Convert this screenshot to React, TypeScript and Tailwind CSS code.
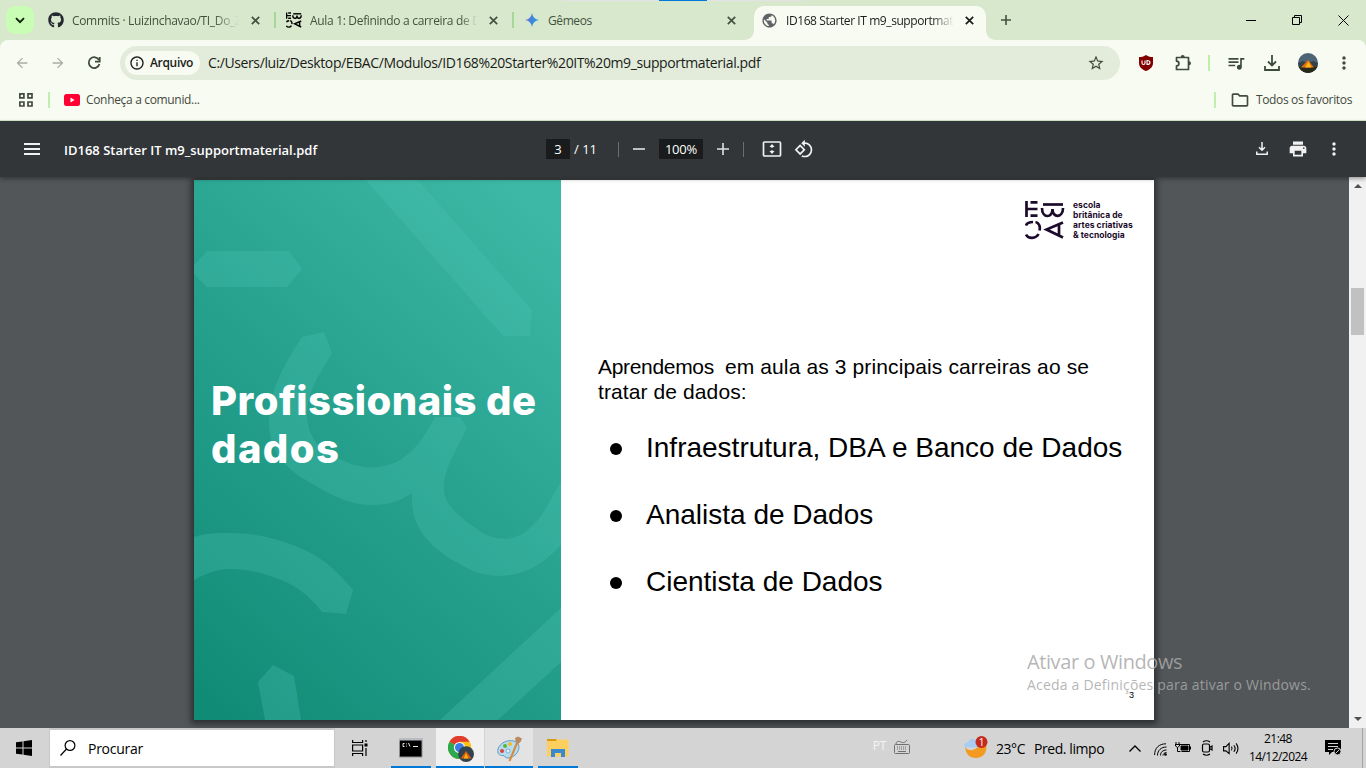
import React from 'react';
import {
  MdArrowBack, MdArrowForward, MdStarBorder, MdQueueMusic, MdPrint, MdMoreVert, MdPublic,
  MdRotate90DegreesCcw, MdOutlineFolder, MdInfoOutline,
} from 'react-icons/md';
import { FaGithub } from 'react-icons/fa';

function EbacMark({ className, weight = 3 }: { className: string; weight?: number }) {
  return (
    <svg viewBox="0 0 40 40" className={className} fill="none" stroke="currentColor" strokeWidth={weight}>
      <path d="M1.500 1v16M2 9h10.500M5.500 2.300h7M5.500 15.700h7" />
      <path d="M18 4.500h20" />
      <path d="M17 8c0 10.500 10.500 10.500 10.500 1c0 9.500 10.500 9 10.500-1" />
      <path d="M1 25.500c1-3 4-3.500 7-3.500M10.500 22c3.500.5 5 4.500 4 8.500M1 34.500c2 4.500 10 4.500 12.500-.5" />
      <path d="M38 22.500L21.500 29.500L38 37.500M34 25v10" />
    </svg>
  );
}

function Avatar({ className }: { className: string }) {
  return (
    <svg viewBox="0 0 20 20" className={className}>
      <defs><clipPath id="round"><circle cx="10" cy="10" r="10" /></clipPath></defs>
      <g clipPath="url(#round)">
        <rect width="20" height="20" fill="#4d6475" />
        <path d="M0 10l5-2 5 2 5-2 5 2v11H0z" fill="#35424a" />
        <rect y="14" width="20" height="6" fill="#26291c" />
        <path d="M3 14.500L10 7l6 7.500z" fill="#e0720c" />
        <path d="M7 14.500l3.500-6 3 6z" fill="#ffb31a" />
      </g>
    </svg>
  );
}

function Gemini() {
  return (
    <svg viewBox="0 0 16 16" className="size-[14px]">
      <defs>
        <linearGradient id="gem" x1="0" y1="0" x2="1" y2="0.3">
          <stop offset="0" stopColor="#8a72c8" /><stop offset=".5" stopColor="#4b7fdc" /><stop offset="1" stopColor="#1ba1e3" />
        </linearGradient>
      </defs>
      <path d="M8 0c.8 4.600 3.400 7.200 8 8c-4.600.8-7.200 3.400-8 8c-.8-4.600-3.400-7.200-8-8c4.600-.8 7.200-3.400 8-8z" fill="url(#gem)" />
    </svg>
  );
}

function CloseX({ className }: { className: string }) {
  return (
    <svg viewBox="0 0 13 13" className={className} fill="none" stroke="currentColor" strokeWidth="1.700"><path d="M2.800 2.800l7.400 7.400M10.200 2.800l-7.400 7.400" /></svg>
  );
}

function TabStrip() {
  return (
    <div className="relative flex h-10 shrink-0 bg-[#d8e8cd] text-[12px] text-[#42523f]">
      <div className="ml-[6px] mt-[6px] flex size-7 items-center justify-center rounded-[9px] bg-[#c9fdb6]">
        <svg viewBox="0 0 10 7" className="h-[7px] w-[10px]" fill="none" stroke="#10200c" strokeWidth="1.900"><path d="M1 1.200l4 4 4-4" /></svg>
      </div>
      <div className="ml-[14px] flex w-[214px] items-center">
        <FaGithub className="size-4 shrink-0 text-[#24292f]" />
        <span className="ml-2 mt-px w-[168px] overflow-hidden whitespace-nowrap tracking-[-0.33px] [mask-image:linear-gradient(90deg,#000_85%,transparent)]">Commits · Luizinchavao/TI_Do_Zero</span>
        <CloseX className="ml-[10px] size-[13px] shrink-0" />
      </div>
      <div className="ml-[12px] mt-3 h-4 w-[2px] bg-[#a3d896]" />
      <div className="ml-[10px] flex w-[214px] items-center">
        <EbacMark className="size-4 shrink-0 text-black" weight={3.6} />
        <span className="ml-2 mt-px w-[168px] overflow-hidden whitespace-nowrap tracking-[-0.32px] [mask-image:linear-gradient(90deg,#000_90%,transparent)]">Aula 1: Definindo a carreira de Dados</span>
        <CloseX className="ml-[10px] size-[13px] shrink-0" />
      </div>
      <div className="ml-[12px] mt-3 h-4 w-[2px] bg-[#a3d896]" />
      <div className="ml-[11px] flex w-[214px] items-center">
        <Gemini />
        <span className="ml-[9px] mt-px w-[167px] tracking-[-0.4px]">Gêmeos</span>
        <CloseX className="ml-[10px] size-[13px] shrink-0" />
      </div>
      <svg viewBox="0 0 10 10" className="mt-[30px] ml-[5px] size-[10px] text-[#f8fbf1]"><path d="M10 0v10H0C6 10 10 6 10 0z" fill="currentColor" /></svg>
      <div className="mt-[6px] flex h-[34px] w-[232px] items-center rounded-t-[10px] bg-[#f8fbf1] text-[#1a1c18]">
        <MdPublic className="ml-[7px] -mt-[6px] size-[17px] shrink-0 text-[#5f6368]" />
        <span className="-mt-[4px] ml-2 w-[168px] overflow-hidden whitespace-nowrap tracking-[-0.42px] [mask-image:linear-gradient(90deg,#000_87%,transparent)]">ID168 Starter IT m9_supportmaterial</span>
        <CloseX className="-mt-[6px] ml-[9px] size-[13px] shrink-0" />
      </div>
      <svg viewBox="0 0 10 10" className="mt-[30px] size-[10px] text-[#f8fbf1]"><path d="M0 0v10h10C4 10 0 6 0 0z" fill="currentColor" /></svg>
      <svg viewBox="0 0 10 10" className="ml-[5px] mt-[15px] size-[10px]" fill="none" stroke="currentColor" strokeWidth="1.600"><path d="M5 0v10M0 5h10" /></svg>
      <div className="ml-auto mt-[15px] flex gap-[35px] pr-[17px] text-black">
        <svg viewBox="0 0 11 11" className="size-[11px]" stroke="currentColor" fill="none"><path d="M0 5.500h10" /></svg>
        <svg viewBox="0 0 11 11" className="size-[11px]" stroke="currentColor" fill="none"><path d="M.5 2.500h7v7h-7zM2.500 2.500v-2h7v7h-2" /></svg>
        <svg viewBox="0 0 11 11" className="size-[11px]" stroke="currentColor" fill="none"><path d="M.5.5l10 10M10.500.5l-10 10" /></svg>
      </div>
      <div className="absolute left-[563px] top-0 h-px w-[240px] bg-[#e4e2e7]" />
      <div className="absolute left-[659px] top-0 h-px w-12 bg-[#0078d7]" />
    </div>
  );
}

function Toolbar() {
  return (
    <div className="shrink-0 bg-[#d8e8cd]">
      <div className="flex h-[46px] items-center rounded-t-[8px] bg-[#f8fbf1] text-[#3f4b3a]">
        <MdArrowBack className="ml-[14px] size-4 text-[#a9ada3]" />
        <MdArrowForward className="ml-5 size-4 text-[#a9ada3]" />
        <svg viewBox="0 0 18 18" className="ml-[19px] size-[18px]" fill="none" stroke="currentColor" strokeWidth="1.800"><path d="M14 6.200A5.400 5.400 0 1 0 14.400 10" /><path d="M14.700 3v4.700H10" /></svg>
        <div className="ml-[17px] flex h-[34px] w-[1000px] items-center rounded-full bg-[#e3ecdb]">
          <div className="ml-[5px] flex h-6 w-[75px] items-center rounded-full bg-[#f8fbf1] pl-1 text-[12px] font-semibold tracking-[-0.33px] text-[#1a1c18]">
            <MdInfoOutline className="mr-[5px] size-4" />Arquivo
          </div>
          <span className="-mt-px ml-2 whitespace-nowrap text-[14px] tracking-[-0.39px] text-[#1a1c18]">C:/Users/luiz/Desktop/EBAC/Modulos/ID168%20Starter%20IT%20m9_supportmaterial.pdf</span>
          <MdStarBorder className="ml-auto mr-[15px] size-[18px]" />
        </div>
        <svg viewBox="0 0 16 16" className="ml-[18px] size-4">
          <path d="M8 0c2.500 1.700 4.500 2 7 2v6c0 4-3 6.500-7 8c-4-1.500-7-4-7-8V2c2.500 0 4.500-.3 7-2z" fill="#800000" />
          <path d="M4 5.500v2.500q0 1.500 1.500 1.500T7 8V5.500M9 5.500v4c4 0 4-4 0-4z" fill="none" stroke="#fff" strokeWidth="1.100" />
        </svg>
        <svg viewBox="0 0 18 18" className="ml-[20px] size-[18px]">
          <path d="M2.500 3.500h12v12h-12v-3.600a2.400 2.400 0 0 0 0-4.800z" fill="none" stroke="currentColor" strokeWidth="1.700" strokeLinejoin="round" />
          <path d="M6.700 3a2 2 0 0 1 4 0zM15 7.300a2 2 0 0 1 0 4z" fill="currentColor" />
        </svg>
        <div className="ml-[16px] h-4 w-[2px] bg-[#bdf0ab]" />
        <MdQueueMusic className="ml-[16px] -mt-px size-[20px]" />
        <svg viewBox="0 0 16 16" className="ml-[18px] size-4" fill="none" stroke="currentColor" strokeWidth="1.800"><path d="M8 0v10M4 6.500l4 4 4-4M1 11v4h14v-4" /></svg>
        <Avatar className="ml-[18px] size-5" />
        <MdMoreVert className="ml-[16px] size-5" />
      </div>
      <div className="flex h-[34px] items-start bg-[#f8fbf1] text-[12px] text-[#42493e]">
        <svg viewBox="0 0 14 14" className="ml-[19px] mt-[7px] size-[14px]" fill="none" stroke="#42493e" strokeWidth="1.700"><path d="M.9.9h4v4h-4zM9 .9h4v4H9zM.9 9h4v4h-4zM9 9h4v4H9z" /></svg>
        <div className="ml-[15px] mt-[6px] h-4 w-[2px] bg-[#bdf0ab]" />
        <svg viewBox="0 0 16 12" className="ml-[14px] mt-2 h-3 w-4"><rect width="16" height="12" rx="2.500" fill="#ff0033" /><path d="M6.500 3.500v5l4-2.500z" fill="#fff" /></svg>
        <span className="ml-[6px] mt-[5px] leading-[18px] tracking-[-0.33px]">Conheça a comunid...</span>
        <div className="ml-auto mt-[6px] h-4 w-[2px] bg-[#bdf0ab]" />
        <MdOutlineFolder className="ml-[14px] mt-[4px] size-[20px]" />
        <span className="ml-[6px] mr-[14px] mt-[5px] leading-[18px] tracking-[-0.35px]">Todos os favoritos</span>
      </div>
      <div className="h-px bg-[#d8e8cd]" />
    </div>
  );
}

function PdfBar() {
  return (
    <div className="relative z-10 flex h-14 shrink-0 items-center bg-[#323639] text-[13px] text-white shadow-[0_2px_4px_rgba(0,0,0,0.35)]">
      <svg viewBox="0 0 16 12" className="ml-6 h-3 w-4" fill="#f1f1f1"><path d="M0 0h16v2H0zM0 5h16v2H0zM0 10h16v2H0z" /></svg>
      <span className="ml-6 mt-[3px] w-[482px] font-semibold">ID168 Starter IT m9_supportmaterial.pdf</span>
      <span className="flex h-5 w-6 items-center justify-center bg-[#191b1c] pt-[2px]">3</span>
      <span className="ml-[4px] mt-[2px] w-[23px]">/ 11</span>
      <div className="ml-[21px] h-[15px] w-px bg-[#6b6e70]" />
      <svg viewBox="0 0 12 12" className="ml-[14px] size-3" stroke="#d8d9d9" strokeWidth="1.700"><path d="M0 6h12" /></svg>
      <span className="ml-[14px] flex h-5 w-11 items-center justify-center bg-[#191b1c] pt-[2px] font-medium tracking-[-0.2px]">100%</span>
      <svg viewBox="0 0 12 12" className="ml-[14px] size-3" stroke="#e0e1e1" strokeWidth="1.600"><path d="M0 6h12M6 0v12" /></svg>
      <div className="ml-[14px] h-[15px] w-px bg-[#6b6e70]" />
      <svg viewBox="0 0 20 16" className="ml-[18px] h-4 w-5" fill="none" stroke="#f1f1f1" strokeWidth="1.700">
        <rect x="1.500" y="1" width="17" height="14" rx="1" />
        <path d="M10 3l2.600 3H7.400zM10 13l2.600-3H7.400z" fill="#f1f1f1" stroke="none" />
        <path d="M10 5v2M10 9v2" strokeWidth="1.200" />
      </svg>
      <MdRotate90DegreesCcw className="ml-[12px] size-[20px] text-[#f1f1f1]" />
      <div className="ml-auto mr-[22px] flex items-center text-[#f1f1f1]">
        <svg viewBox="0 0 12 13" className="-mt-px h-[13px] w-3" fill="none" stroke="currentColor" strokeWidth="1.500"><path d="M6 0v8M3 5.200l3 3 3-3M.8 9.500v2.700h10.400V9.500" /></svg>
        <MdPrint className="ml-[20px] size-5" />
        <MdMoreVert className="ml-[16px] size-5" />
      </div>
    </div>
  );
}

function SlideArt() {
  return (
    <svg viewBox="0 0 367 540" className="absolute inset-0 h-full w-full" fill="#4cc4b4" fillOpacity=".3">
      <path d="M172 0H224L338 130L336 156H309Z" />
      <path d="M0 85L13 71H95L108 89L93 107H13L0 94Z" />
      <path d="M108 157L130 152L138 173C124 197 113 212 113 235C114 261 129 271 144 278C165 290 190 291 209 278C226 266 233 251 241 237L266 237L273 248L263 268C252 288 244 309 255 324C262 335 277 345 287 352C302 361 322 362 336 348C349 337 357 318 367 302V365C351 382 334 395 306 396C289 396 277 391 262 382C234 366 216 346 218 313C206 321 196 325 178 325C152 325 130 311 110 299C86 284 75 266 75 242C76 210 87 190 108 157Z" />
      <path d="M0 357C11 353 23 353 36 353C66 353 92 361 113 371C133 381 147 395 159 410L152 434L128 432C114 414 99 403 79 397C65 392 50 389 36 389C22 389 11 394 0 400Z" />
      <path d="M71 540L64 502L79 485L100 496L107 540Z" />
      <path d="M246 540L367 428V482L304 540Z" />
    </svg>
  );
}

const careers = ['Infraestrutura, DBA e Banco de Dados', 'Analista de Dados', 'Cientista de Dados'];

function Slide() {
  return (
    <div className="ml-[194px] mt-[3px] flex h-[540px] w-[960px] shrink-0 bg-white shadow-[0_1px_6px_3px_rgba(0,0,0,0.45)]">
      <div className="relative w-[367px] shrink-0 bg-[linear-gradient(222deg,#3db8a6_5%,#26a18e_50%,#108c76_97%)]">
        <SlideArt />
        <h1 className="relative whitespace-nowrap pl-[17px] pt-[197px] font-['Inter'] text-[40px] font-extrabold leading-[48px] tracking-[0.46px] text-white">Profissionais de<br /><span className="tracking-[1.4px]">dados</span></h1>
      </div>
      <div className="flex min-w-0 flex-1 flex-col font-['Liberation_Sans'] text-black">
        <div className="mr-[20px] mt-[20px] flex self-end text-[#1c0b2b]">
          <EbacMark className="h-10 w-10" weight={2.700} />
          <div className="ml-[8px] w-[61px] whitespace-nowrap font-['Inter'] text-[8.500px] font-bold leading-[10px] tracking-[0.03px]">escola<br />britânica de<br />artes criativas<br />&amp; tecnologia</div>
        </div>
        <p className="ml-[37px] mt-[114px] whitespace-pre text-[21px] leading-[25px]"><span className="tracking-[-0.32px]">{'Aprendemos  '}</span><span className="tracking-[0.12px]">{'em aula as 3 principais carreiras ao se'}</span>{'\n'}<span className="tracking-[0.1px]">tratar de dados:</span></p>
        <ul className="ml-[49px] mt-[10px]">
          {careers.map((c) => (
            <li key={c} className="flex h-[67px] items-center whitespace-nowrap text-[28px] leading-8">
              <span className="mr-[24px] mt-[2px] size-[12px] rounded-full bg-black" />{c}
            </li>
          ))}
        </ul>
        <span className="mb-[20px] mr-[20px] mt-auto self-end text-[9px] leading-[10px]">3</span>
      </div>
    </div>
  );
}

function Viewer() {
  return (
    <div className="relative flex min-h-0 flex-1 overflow-hidden bg-[#525659]">
      <Slide />
      <div className="ml-auto flex w-[17px] flex-col items-center bg-[#f1f1f1]">
        <svg viewBox="0 0 8 4" className="mt-[7px] h-1 w-2" fill="#505050"><path d="M0 4l4-4 4 4z" /></svg>
        <div className="mt-[100px] h-[47px] w-[13px] bg-[#c1c1c1]" />
        <svg viewBox="0 0 8 4" className="mb-[7px] mt-auto h-1 w-2" fill="#505050"><path d="M0 0l4 4 4-4z" /></svg>
      </div>
      <div className="absolute left-[1027px] top-[472px] whitespace-nowrap text-[#a8a8a8]/85">
        <div className="text-[20px] leading-[26px] tracking-[-0.4px]">Ativar o Windows</div>
        <div className="text-[14px] leading-[20px] tracking-[0.2px]">Aceda a Definições para ativar o Windows.</div>
      </div>
    </div>
  );
}

function Taskbar() {
  return (
    <div className="flex h-10 shrink-0 items-stretch bg-[#d4d4d4] text-[14px] text-black">
      <svg viewBox="0 0 16 16" className="ml-4 mt-3 size-4"><path d="M0 2.300L6.500 1.400V7.500H0zM7.500 1.200L16 0v7.500H7.500zM0 8.500h6.500v6.100L0 13.700zM7.500 8.500H16V16L7.500 14.800z" /></svg>
      <div className="ml-[17px] flex h-10 w-[286px] items-center border-x border-y-2 border-[#c8c8c8] bg-white">
        <svg viewBox="0 0 16 16" className="ml-[10px] size-4" fill="none" stroke="#000" strokeWidth="1.200"><circle cx="10" cy="5.500" r="4.900" /><path d="M6.500 9L.5 15.500" /></svg>
        <span className="ml-[12px] tracking-[-0.26px]">Procurar</span>
      </div>
      <svg viewBox="0 0 16 16" className="ml-[17px] mt-3 size-4" fill="none" stroke="#000" strokeWidth="1.200"><path d="M.6 0v2.500h10V0M.6 16v-2.500h10V16M.6 5h10v6h-10zM14 0v2M14 8v8" /><path d="M12.500 3.500h3v3h-3z" fill="#000" stroke="none" /></svg>
      <div className="ml-[23px] flex w-10 flex-col items-center border-b-2 border-[#0078d7] pt-[10px]">
        <svg viewBox="0 0 24 20" className="h-5 w-6"><rect x=".5" y=".5" width="22.500" height="18.500" fill="#000" stroke="#8b8f94" /><path d="M0 0h23.500v2.500H0z" fill="#b9bdc2" /><path d="M5.500 5.500h-1.500v3h1.500M7.500 5.500v.8M7.500 7.700v.8M9.500 5l1.500 3.500M14 8.500h5" stroke="#fff" fill="none" strokeWidth=".9" /></svg>
      </div>
      <div className="ml-[5px] flex w-12 justify-center border-b-2 border-[#0078d7] bg-[#f0f0f0] pt-2 pl-[2px]">
        <svg viewBox="0 0 26 26" className="size-[26px]">
          <circle cx="11.500" cy="11.500" r="11.500" fill="#fbc116" />
          <path d="M11.500 11.500L1.500 5.700A11.500 11.500 0 0 1 21.500 5.700z" fill="#e33b2e" />
          <path d="M11.500 11.500L1.500 5.700A11.500 11.500 0 0 0 11.500 23l5-9z" fill="#2da94f" />
          <path d="M11.500 5.700h10A11.500 11.500 0 0 1 11.500 23l5-9z" fill="#fbc116" />
          <circle cx="11.500" cy="11.500" r="5.600" fill="#fff" /><circle cx="11.500" cy="11.500" r="4.500" fill="#3a7de8" />
          <g transform="translate(10.200 10.200) scale(.79)"><circle cx="10" cy="10" r="10" fill="#34424d" /><path d="M3 15.500L10 6l7 9.500z" fill="#d9600b" /><path d="M7 15.500L10 9l3 6.500z" fill="#ffb31a" /></g>
        </svg>
      </div>
      <div className="ml-px flex w-12 justify-center border-b-2 border-[#0078d7] bg-[#e3e3e3] pt-2">
        <svg viewBox="0 0 26 26" className="size-[26px]">
          <path d="M2 13C4 7 11 3.500 18 5c5 1.500 6 6 4 10c-2 4.500-6 6.500-10 7c-3 .3-3-2.500-5-2.500c-4 .5-6-2.500-5-6.500z" fill="#b5dcf0" stroke="#6399bd" />
          <circle cx="6" cy="15" r="2" fill="#d9443b" /><circle cx="9" cy="10" r="2" fill="#62b432" /><circle cx="14" cy="8" r="2" fill="#f0bd25" /><circle cx="12" cy="15" r="2" fill="#e4f2f8" stroke="#6399bd" strokeWidth=".7" />
          <path d="M13.500 25L21 7" stroke="#dd8735" strokeWidth="2" /><path d="M20 7l-1-5 3-1.500 4 2-1.500 3.500-2.500 2z" fill="#b98a60" />
        </svg>
      </div>
      <div className="ml-[5px] flex w-10 justify-center border-b-2 border-[#0078d7] pt-[10px]">
        <svg viewBox="0 0 24 20" className="h-5 w-6"><path d="M1 1h9l2 2H1z" fill="#d99b0d" /><path d="M1 3h9l1-1.500h11.500v17H1z" fill="#fccf5e" /><path d="M5 19v-8h14v8h-4v-4H9v4z" fill="#3889d0" /></svg>
      </div>
      <div className="ml-auto flex items-center">
        <span className="-mt-1 text-[12px] text-[#f4f4f4] tracking-[-0.3px]">PT</span>
        <svg viewBox="0 0 16 15" className="-mt-1 ml-[8px] h-[15px] w-4" fill="none" stroke="#707070"><rect x=".5" y="5.500" width="15" height="9" rx="1" /><path d="M3 8h10M3 10h10" strokeDasharray="1 1" strokeWidth="1.200" /><path d="M4 12.500h8M2 5c0-3 3-3 5-2s4 1 6-2" /></svg>
        <svg viewBox="0 0 25 24" className="ml-[53px] h-6 w-[25px]">
          <path d="M2 11c4 5 10 4 14-2l7-1c2 8-3 14-10 14S3 18 2 11z" fill="#f39a20" /><path d="M2 11.500C-.5 8 2.500 6 5 6.500c1-5 8-5 9 0c4 0 4 5 1 5z" fill="#a9cdf2" />
          <circle cx="18.500" cy="6" r="6" fill="#c42b1c" /><text x="18.500" y="9.500" fontSize="10" fill="#fff" textAnchor="middle" fontFamily="Open Sans">1</text>
        </svg>
        <span className="ml-[8px] w-[30px] tracking-[-0.45px]">23°C</span>
        <span className="ml-2 w-[71px] whitespace-nowrap tracking-[-0.43px]">Pred. limpo</span>
        <svg viewBox="0 0 12 7" className="ml-[24px] h-[7px] w-3" fill="none" stroke="#000" strokeWidth="1.300"><path d="M.5 6.500L6 1l5.500 5.500" /></svg>
        <svg viewBox="0 0 13 13" className="ml-[13px] mt-[2px] size-[13px]" fill="none" stroke="#000"><path d="M.6 12C.6 5 5 .8 12 .8M3.500 12.500c0-5 3.500-8.500 9-8.500M6.500 12.500C6.500 9 9 7 12.500 7M9 12.500c0-1.500 1.500-3 3.500-3" /><circle cx="11.500" cy="11.500" r="1.300" fill="#000" stroke="none" /></svg>
        <svg viewBox="0 0 16 12" className="ml-[8px] h-3 w-4" fill="none" stroke="#000"><path d="M4.500 2.500h10v7h-8M15.500 4.500v3" /><path d="M6 4h7v4H6z" fill="#000" /><path d="M1 0v2M4 0v2M0 2.500h5M.5 2v2l2 1.500v4h3M4.500 3v1l-2 1.500" /></svg>
        <svg viewBox="0 0 12 16" className="ml-[10px] h-4 w-3" fill="none" stroke="#000" strokeWidth="1.200"><rect x="1.500" y="4" width="7" height="8" rx="1.500" /><path d="M8.500 7.500l2.500-1.500v4L8.500 8.500M2 2q3.500-2.500 7 0M2 14q3.500 2.500 7 0" /></svg>
        <svg viewBox="0 0 17 14" className="ml-[10px] h-[13px] w-4" fill="none" stroke="#000" strokeWidth="1.200"><path d="M.5 5h2.500L6.500 1.500v11L3 9.500H.5zM9 5q1.500 2 0 4M11.500 3.500q3 3.500 0 7" /><path d="M14 1.500q4 5.500 0 11" /></svg>
        <div className="ml-[9px] flex w-[60px] flex-col items-center text-[12px] leading-[18px] tracking-[-0.55px]"><span>21:48</span><span>14/12/2024</span></div>
        <svg viewBox="0 0 17 16" className="ml-[17px] h-4 w-[17px]"><path d="M0 0h16v12H7l-3 3v-3H0z" /><path d="M3 3.500h10M3 6.500h10M3 9.500h5" stroke="#d4d4d4" strokeWidth="1.200" /><circle cx="12.500" cy="11.500" r="3.500" stroke="#d4d4d4" /><path d="M10.500 13.500l4-4" stroke="#d4d4d4" /></svg>
        <div className="ml-[20px] mr-[3px] h-10 w-px bg-[#a3a3a3]" />
      </div>
    </div>
  );
}

export default function App() {
  return (
    <div className="flex h-[768px] w-[1366px] flex-col overflow-hidden font-['Open_Sans',sans-serif]">
      <TabStrip />
      <Toolbar />
      <PdfBar />
      <Viewer />
      <Taskbar />
    </div>
  );
}
